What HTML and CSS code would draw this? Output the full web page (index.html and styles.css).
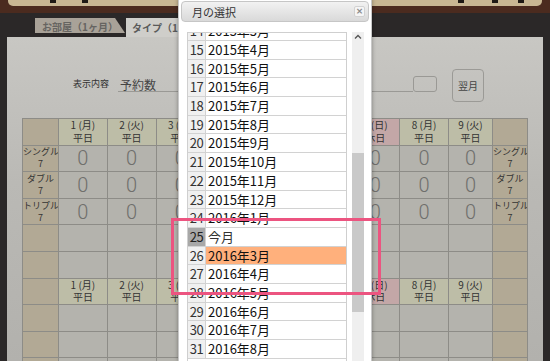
FILE: index.html
```html
<!DOCTYPE html>
<html lang="ja">
<head>
<meta charset="utf-8">
<title>月の選択</title>
<link rel="stylesheet" href="styles.css">
</head>
<body>
<div class="page">
  <header class="topbar">
    <div class="parchment">
      <span class="stub stub-1"></span>
      <span class="stub stub-2"></span>
      <span class="stub stub-3"></span>
      <span class="stub stub-4"></span>
      <span class="stub stub-5"></span>
    </div>
  </header>
  <nav class="tabs">
    <div class="tab tab-inactive">お部屋（1ヶ月）</div>
    <div class="tab tab-active">タイプ（1ヶ月）</div>
  </nav>
  <main class="panel">
    <div class="controls">
      <span class="ctl-label">表示内容</span>
      <div class="ctl-field">予約数</div>
      <div class="ctl-drop"></div>
      <button class="ctl-next">翌月</button>
    </div>
    <table class="grid">
      <colgroup>
        <col class="c-type"><col class="c-day"><col class="c-day"><col class="c-day"><col class="c-day"><col class="c-day"><col class="c-day"><col class="c-day"><col class="c-day"><col class="c-last"><col class="c-type2">
      </colgroup>
      <tr>
        <td class="type"></td>
        <td class="day">1 (月)<br>平日</td><td class="day">2 (火)<br>平日</td><td class="day">3 (水)<br>平日</td><td class="day">4 (木)<br>平日</td><td class="day">5 (金)<br>平日</td><td class="day sat">6 (土)<br>休日</td><td class="day sun">7 (日)<br>休日</td><td class="day">8 (月)<br>平日</td><td class="day">9 (火)<br>平日</td>
        <td class="type"></td>
      </tr>
      <tr>
        <td class="type">シングル<br>7</td>
        <td class="zero">0</td><td class="zero">0</td><td class="zero">0</td><td class="zero">0</td><td class="zero">0</td><td class="zero">0</td><td class="zero">0</td><td class="zero">0</td><td class="zero">0</td>
        <td class="type">シングル<br>7</td>
      </tr>
      <tr>
        <td class="type">ダブル<br>7</td>
        <td class="zero">0</td><td class="zero">0</td><td class="zero">0</td><td class="zero">0</td><td class="zero">0</td><td class="zero">0</td><td class="zero">0</td><td class="zero">0</td><td class="zero">0</td>
        <td class="type">ダブル<br>7</td>
      </tr>
      <tr>
        <td class="type">トリプル<br>7</td>
        <td class="zero">0</td><td class="zero">0</td><td class="zero">0</td><td class="zero">0</td><td class="zero">0</td><td class="zero">0</td><td class="zero">0</td><td class="zero">0</td><td class="zero">0</td>
        <td class="type">トリプル<br>7</td>
      </tr>
      <tr>
        <td class="type"></td><td></td><td></td><td></td><td></td><td></td><td></td><td></td><td></td><td></td><td class="type"></td>
      </tr>
      <tr>
        <td class="type"></td><td></td><td></td><td></td><td></td><td></td><td></td><td></td><td></td><td></td><td class="type"></td>
      </tr>
      <tr>
        <td class="type"></td>
        <td class="day">1 (月)<br>平日</td><td class="day">2 (火)<br>平日</td><td class="day">3 (水)<br>平日</td><td class="day">4 (木)<br>平日</td><td class="day">5 (金)<br>平日</td><td class="day sat">6 (土)<br>休日</td><td class="day sun">7 (日)<br>休日</td><td class="day">8 (月)<br>平日</td><td class="day">9 (火)<br>平日</td>
        <td class="type"></td>
      </tr>
      <tr>
        <td class="type"></td><td></td><td></td><td></td><td></td><td></td><td></td><td></td><td></td><td></td><td class="type"></td>
      </tr>
      <tr>
        <td class="type"></td><td></td><td></td><td></td><td></td><td></td><td></td><td></td><td></td><td></td><td class="type"></td>
      </tr>
      <tr>
        <td class="type"></td><td></td><td></td><td></td><td></td><td></td><td></td><td></td><td></td><td></td><td class="type"></td>
      </tr>
    </table>
  </main>
</div>

<div class="dialog">
  <div class="dlg-title">
    <span class="dlg-caption">月の選択</span>
    <span class="dlg-close">×</span>
  </div>
  <div class="dlg-body">
    <div class="list-view">
      <div class="list">
        <div class="row"><span class="num">14</span><span class="month">2015年3月</span></div>
        <div class="row"><span class="num">15</span><span class="month">2015年4月</span></div>
        <div class="row"><span class="num">16</span><span class="month">2015年5月</span></div>
        <div class="row"><span class="num">17</span><span class="month">2015年6月</span></div>
        <div class="row"><span class="num">18</span><span class="month">2015年7月</span></div>
        <div class="row"><span class="num">19</span><span class="month">2015年8月</span></div>
        <div class="row"><span class="num">20</span><span class="month">2015年9月</span></div>
        <div class="row"><span class="num">21</span><span class="month">2015年10月</span></div>
        <div class="row"><span class="num">22</span><span class="month">2015年11月</span></div>
        <div class="row"><span class="num">23</span><span class="month">2015年12月</span></div>
        <div class="row"><span class="num">24</span><span class="month">2016年1月</span></div>
        <div class="row row-current"><span class="num">25</span><span class="month">今月</span></div>
        <div class="row row-selected"><span class="num">26</span><span class="month">2016年3月</span></div>
        <div class="row"><span class="num">27</span><span class="month">2016年4月</span></div>
        <div class="row"><span class="num">28</span><span class="month">2016年5月</span></div>
        <div class="row"><span class="num">29</span><span class="month">2016年6月</span></div>
        <div class="row"><span class="num">30</span><span class="month">2016年7月</span></div>
        <div class="row"><span class="num">31</span><span class="month">2016年8月</span></div>
      </div>
    </div>
    <div class="scrollbar">
      <svg class="sb-arrow" width="12" height="10" viewBox="0 0 12 10"><path d="M3 6.5 L6 3.5 L9 6.5" fill="none" stroke="#555" stroke-width="1.3"/></svg>
      <div class="sb-thumb"></div>
    </div>
  </div>
</div>

<div class="annotation"></div>
</body>
</html>
```

FILE: styles.css
```css
* { box-sizing: border-box; }
html, body { margin: 0; padding: 0; }
body {
  width: 550px;
  height: 361px;
  overflow: hidden;
  position: relative;
  background: #2b2828;
  font-family: "Noto Sans CJK JP", "Noto Sans", sans-serif;
}

/* top header strip */
.topbar {
  height: 13px;
  background: #4b2b1f;
  padding: 0 8px;
}
.parchment {
  height: 6px;
  background: #c8b793;
  border-radius: 0 0 5px 5px;
  display: flex;
  align-items: flex-start;
}
.stub { flex: none; width: 6px; height: 3px; background: #1f1a15; }
.stub-1 { margin-left: 42px; }
.stub-2 { margin-left: 26px; }
.stub-3 { margin-left: 370px; }
.stub-4 { margin-left: 28px; }
.stub-5 { margin-left: 20px; }

/* tabs */
.tabs {
  height: 24px;
  display: flex;
  align-items: flex-start;
  padding: 5px 0 0 35px;
}
.tab {
  font-size: 10px;
  font-weight: bold;
  white-space: nowrap;
  overflow: hidden;
}
.tab-inactive {
  width: 90px;
  height: 15px;
  line-height: 17px;
  padding-left: 7px;
  background: #a9a298;
  color: #666461;
  clip-path: polygon(0 0, 80px 0, 90px 100%, 0 100%);
}
.tab-active {
  margin-left: 1px;
  width: 130px;
  height: 19px;
  line-height: 19px;
  padding-left: 6px;
  background: #cfceca;
  color: #5a5a5a;
}

/* main panel */
.panel {
  margin: 0 7px;
  height: 324px;
  overflow: hidden;
  padding: 32px 15px 0;
  background: linear-gradient(#c8c7c3, #bab9b5 45%, #b2b1ad);
}
.controls {
  display: flex;
  align-items: flex-start;
  height: 33px;
}
.ctl-label {
  margin: 9px 0 0 51px;
  width: 36px;
  font-size: 9px;
  line-height: 12px;
  color: #333;
  white-space: nowrap;
}
.ctl-field {
  margin: 7px 0 0 9px;
  width: 295px;
  height: 16px;
  padding-left: 2px;
  border-bottom: 1px solid #9a9995;
  font-size: 12px;
  line-height: 18px;
  color: #444;
}
.ctl-drop {
  margin-top: 7px;
  width: 24px;
  height: 16px;
  border: 1px solid #9a9995;
  border-radius: 3px;
}
.ctl-next {
  margin-left: 15px;
  width: 32px;
  height: 33px;
  padding: 0;
  border: 1px solid #9b9a96;
  border-radius: 4px;
  background: transparent;
  font-family: "Noto Sans CJK JP", sans-serif;
  font-size: 10px;
  color: #444;
}

/* schedule grid */
.grid {
  margin-top: 16px;
  border-collapse: collapse;
  table-layout: fixed;
  width: 506px;
}
.c-type { width: 36px; }
.c-day { width: 48.7px; }
.c-last { width: 44px; }
.c-type2 { width: 35px; }
.grid td {
  height: 26.6px;
  padding: 0;
  border: 1px solid #8d8c87;
  background: #b4b3ad;
  text-align: center;
  vertical-align: middle;
  overflow: hidden;
  white-space: nowrap;
}
.grid td.type {
  background: #b2a995;
  font-size: 9px;
  line-height: 12px;
  color: #333;
}
.grid td.day {
  background: #bdbda7;
  font-size: 10px;
  line-height: 12.5px;
  color: #333;
}
.grid td.sun { background: #c3a7a7; }
.grid td.zero {
  font-family: Roboto, "Liberation Sans", sans-serif;
  font-weight: 300;
  font-size: 20px;
  color: #6f6f6c;
}

/* month picker dialog */
.dialog {
  position: absolute;
  left: 178px;
  top: -2px;
  width: 194px;
  height: 363px;
  padding: 2px 2px 0;
  display: flex;
  flex-direction: column;
  background: #fff;
  border: 1px solid #c8c8c8;
  border-bottom: none;
  box-shadow: 0 0 4px rgba(0, 0, 0, 0.35);
}
.dlg-title {
  flex: none;
  height: 21px;
  display: flex;
  align-items: center;
  justify-content: space-between;
  padding: 0 3px 0 10px;
  border: 1px solid #c6c6c6;
  border-radius: 4px;
  background: linear-gradient(#f2f2f2, #d9d9d9);
}
.dlg-caption {
  font-size: 11px;
  color: #333;
}
.dlg-close {
  width: 11px;
  height: 11px;
  display: flex;
  align-items: center;
  justify-content: center;
  border: 1px solid #d2d2d2;
  border-radius: 2px;
  background: #f5f5f5;
  font-family: "DejaVu Sans", sans-serif;
  font-size: 9px;
  font-weight: bold;
  color: #888;
  line-height: 1;
}
.dlg-body {
  flex: 1;
  min-height: 0;
  display: flex;
  margin: 10px 0 0 6px;
}
.list-view {
  width: 160px;
  overflow: hidden;
  border: 1px solid #cfcfcf;
  border-bottom: none;
}
.list { margin-top: -10.7px; }
.row {
  display: grid;
  grid-template-columns: 18px 1fr;
  height: 18.7px;
  border-bottom: 1px solid #d2d2d2;
  font-size: 13px;
  line-height: 17.7px;
  color: #111;
}
.num {
  background: #f0f0f0;
  border-right: 1px solid #d2d2d2;
  text-align: center;
  color: #333;
  letter-spacing: -0.5px;
}
.month {
  padding-left: 2px;
  white-space: nowrap;
}
.row-current .num { background: #a8a8a8; color: #222; }
.row-current .month { color: #333; }
.row-selected .month { background: #ffb07c; }

.scrollbar {
  margin-left: 5px;
  width: 12px;
  background: #efefef;
  display: flex;
  flex-direction: column;
}
.sb-arrow { display: block; flex: none; }
.sb-thumb {
  flex: none;
  margin-top: 111px;
  height: 159px;
  background: #c9c9c9;
}

/* red annotation frame */
.annotation {
  position: absolute;
  left: 171px;
  top: 218px;
  width: 210px;
  height: 77px;
  border: 3px solid #ec5480;
}
```
